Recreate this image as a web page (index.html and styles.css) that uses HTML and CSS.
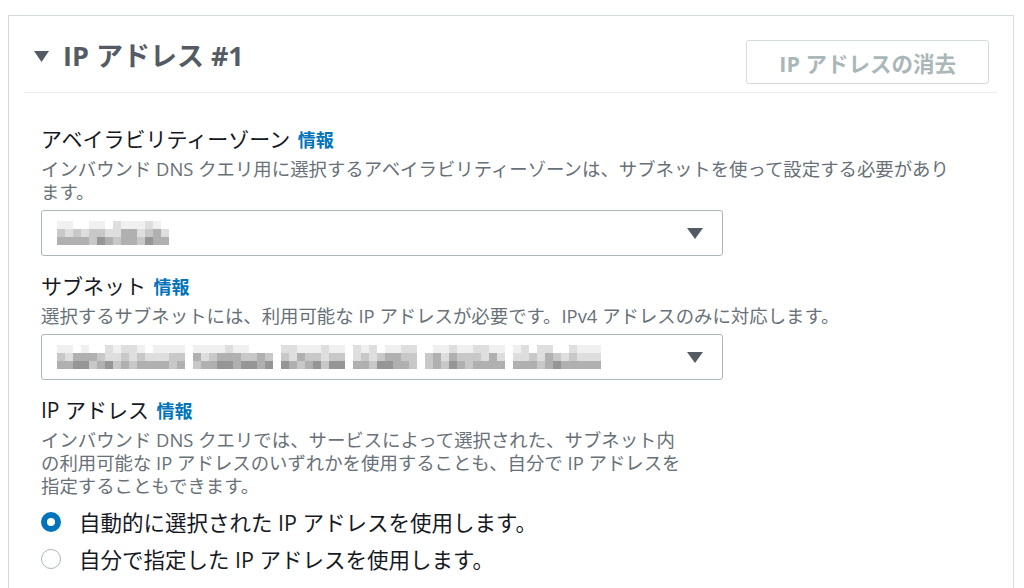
FILE: index.html
```html
<!DOCTYPE html>
<html>
  <head>
    <meta charset="utf-8">
    <meta name="viewport" content="width=device-width, initial-scale=1.0">
    <title>IP アドレス #1</title>
    <link rel="stylesheet" href="styles.css">
  </head>
  <body>
    <div class="page">
      <div class="panel">
        <div class="panel-header">
          <h2 class="panel-title">
            <svg class="caret" width="15" height="11" viewBox="0 0 15 11"><path d="M0 0h15L7.5 11z" fill="#545b64"/></svg>
            IP アドレス #1
          </h2>
          <button class="remove-button" disabled>IP アドレスの消去</button>
        </div>

        <div class="panel-body">
          <div class="field">
            <div class="field-label">アベイラビリティーゾーン <a class="info">情報</a></div>
            <div class="field-desc">インバウンド DNS クエリ用に選択するアベイラビリティーゾーンは、サブネットを使って設定する必要があり<br>ます。</div>
            <div class="select">
              <div class="mosaic" data-cols="14" data-seed="7" data-gaps=""></div>
              <svg class="select-arrow" width="16" height="11" viewBox="0 0 16 11"><path d="M0 0h16L8 11z" fill="#545b64"/></svg>
            </div>
          </div>

          <div class="field">
            <div class="field-label">サブネット <a class="info">情報</a></div>
            <div class="field-desc">選択するサブネットには、利用可能な IP アドレスが必要です。IPv4 アドレスのみに対応します。</div>
            <div class="select">
              <div class="mosaic" data-cols="68" data-seed="31" data-gaps="16 27 36 45 56"></div>
              <svg class="select-arrow" width="16" height="11" viewBox="0 0 16 11"><path d="M0 0h16L8 11z" fill="#545b64"/></svg>
            </div>
          </div>

          <div class="field">
            <div class="field-label">IP アドレス <a class="info">情報</a></div>
            <div class="field-desc">インバウンド DNS クエリでは、サービスによって選択された、サブネット内<br>の利用可能な IP アドレスのいずれかを使用することも、自分で IP アドレスを<br>指定することもできます。</div>
            <div class="options">
              <label class="option"><span class="radio checked"></span>自動的に選択された IP アドレスを使用します。</label>
              <label class="option"><span class="radio"></span>自分で指定した IP アドレスを使用します。</label>
            </div>
          </div>
        </div>
      </div>
    </div>
    <script src="script.js"></script>
  </body>
</html>
```

FILE: styles.css
```css
html, body {
  margin: 0;
  padding: 0;
  background-color: #fff;
  color: #16191f;
  font-family: "Open Sans", "Noto Sans CJK JP", sans-serif;
  overflow: hidden;
}
.page {
  padding: 15px 10px 0 8px;
}
.panel {
  border: 1px solid #d5dbdb;
  border-bottom: none;
  height: 600px;
}
.panel-header {
  display: flex;
  justify-content: space-between;
  align-items: flex-start;
  margin: 0 16px;
  padding: 24px 8px 8px 9px;
  border-bottom: 1px solid #eaeded;
}
.panel-title {
  display: flex;
  align-items: center;
  gap: 14px;
  margin: 0;
  font-size: 27px;
  line-height: 32px;
  font-weight: bold;
  color: #545b64;
}
.remove-button {
  height: 44px;
  padding: 0 32px;
  background: #fff;
  border: 1px solid #d5dbdb;
  border-radius: 3px;
  color: #aab7b8;
  font-family: inherit;
  font-size: 21.5px;
  font-weight: bold;
}
.panel-body {
  padding: 33px 32px 0 32px;
}
.field {
  margin-bottom: 17px;
}
.field-label {
  font-size: 21px;
  line-height: 26px;
}
.info {
  margin-left: 2px;
  color: #0073bb;
  font-size: 18px;
  font-weight: bold;
  cursor: pointer;
}
.field-desc {
  margin-top: 4px;
  font-size: 18.4px;
  line-height: 23px;
  color: #687078;
}
.select {
  display: flex;
  align-items: center;
  justify-content: space-between;
  box-sizing: border-box;
  width: 682px;
  height: 46px;
  margin-top: 7px;
  padding: 0 19px 0 15px;
  border: 1px solid #aab7b8;
  border-radius: 3px;
}
.mosaic {
  filter: blur(0.7px);
}
.mosaic-row {
  display: flex;
}
.cell {
  width: 8px;
  height: 8px;
}
.s0 { background: transparent; }
.s1 { background: #f0f0f0; }
.s2 { background: #dedede; }
.s3 { background: #c8c8c8; }
.s4 { background: #b0b0b0; }
.s5 { background: #969696; }
.options {
  margin-top: 6px;
}
.option {
  display: flex;
  align-items: center;
  gap: 18px;
  height: 37px;
  font-size: 21.5px;
}
.radio {
  box-sizing: border-box;
  width: 20px;
  height: 20px;
  border: 1.5px solid #aab7b8;
  border-radius: 50%;
  background: #fff;
}
.radio.checked {
  border: 6px solid #0073bb;
}
```

FILE: script.js
```js
// fake the blurred-out values inside the selects
function buildMosaic(el) {
  const cols = +el.dataset.cols;
  const gaps = el.dataset.gaps.split(' ').filter(Boolean).map(Number);
  let seed = +el.dataset.seed;
  const rand = () => {
    seed = (seed * 9301 + 49297) % 233280;
    return seed / 233280;
  };
  const rows = [
    ['s0', 's1', 's1', 's2'],
    ['s2', 's3', 's3', 's4'],
    ['s3', 's4', 's4', 's5']
  ];
  rows.forEach(shades => {
    const row = document.createElement('div');
    row.className = 'mosaic-row';
    for (let i = 0; i < cols; i++) {
      const cell = document.createElement('span');
      const shade = gaps.includes(i) ? 's0' : shades[Math.floor(rand() * shades.length)];
      cell.className = 'cell ' + shade;
      row.appendChild(cell);
    }
    el.appendChild(row);
  });
}
document.querySelectorAll('.mosaic').forEach(buildMosaic);
```
